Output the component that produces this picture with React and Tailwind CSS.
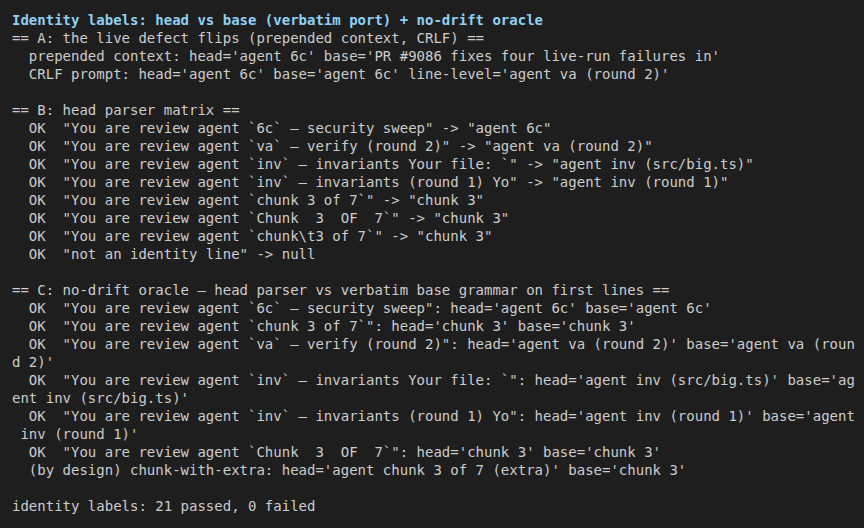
import React from 'react';

const lines = [
  { text: 'Identity labels: head vs base (verbatim port) + no-drift oracle', title: true },
  { text: '== A: the live defect flips (prepended context, CRLF) ==' },
  { text: "  prepended context: head='agent 6c' base='PR #9086 fixes four live-run failures in'" },
  { text: "  CRLF prompt: head='agent 6c' base='agent 6c' line-level='agent va (round 2)'" },
  { text: '' },
  { text: '== B: head parser matrix ==' },
  { text: '  OK  "You are review agent `6c` — security sweep" -> "agent 6c"' },
  { text: '  OK  "You are review agent `va` — verify (round 2)" -> "agent va (round 2)"' },
  { text: '  OK  "You are review agent `inv` — invariants Your file: `" -> "agent inv (src/big.ts)"' },
  { text: '  OK  "You are review agent `inv` — invariants (round 1) Yo" -> "agent inv (round 1)"' },
  { text: '  OK  "You are review agent `chunk 3 of 7`" -> "chunk 3"' },
  { text: '  OK  "You are review agent `Chunk  3  OF  7`" -> "chunk 3"' },
  { text: '  OK  "You are review agent `chunk\\t3 of 7`" -> "chunk 3"' },
  { text: '  OK  "not an identity line" -> null' },
  { text: '' },
  { text: '== C: no-drift oracle — head parser vs verbatim base grammar on first lines ==' },
  { text: "  OK  \"You are review agent `6c` — security sweep\": head='agent 6c' base='agent 6c'" },
  { text: "  OK  \"You are review agent `chunk 3 of 7`\": head='chunk 3' base='chunk 3'" },
  { text: "  OK  \"You are review agent `va` — verify (round 2)\": head='agent va (round 2)' base='agent va (roun" },
  { text: "d 2)'" },
  { text: "  OK  \"You are review agent `inv` — invariants Your file: `\": head='agent inv (src/big.ts)' base='ag" },
  { text: "ent inv (src/big.ts)'" },
  { text: "  OK  \"You are review agent `inv` — invariants (round 1) Yo\": head='agent inv (round 1)' base='agent" },
  { text: " inv (round 1)'" },
  { text: "  OK  \"You are review agent `Chunk  3  OF  7`\": head='chunk 3' base='chunk 3'" },
  { text: "  (by design) chunk-with-extra: head='agent chunk 3 of 7 (extra)' base='chunk 3'" },
  { text: '' },
  { text: 'identity labels: 21 passed, 0 failed' },
];

export default function App() {
  return (
    <div className="min-h-screen w-full bg-[#1e1e1e] pl-3 pt-[11px] font-['DejaVu_Sans_Mono',monospace] text-[14px] leading-[18px] text-[#cccccc]">
      {lines.map((line, i) => (
        <div
          key={i}
          className={`h-[18px] whitespace-pre ${line.title ? 'font-bold text-[#8fd0f5]' : ''}`}
        >
          {line.text}
        </div>
      ))}
    </div>
  );
}
